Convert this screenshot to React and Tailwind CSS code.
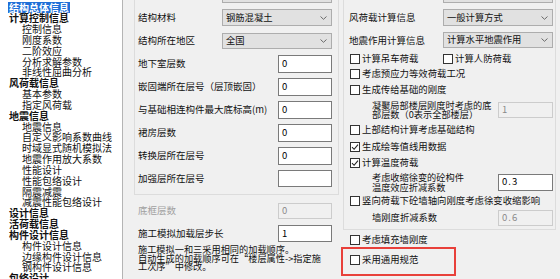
import clsx from 'clsx'

const treeItems = [
    { label: '结构总体信息', top: true, selected: true },
    { label: '计算控制信息', top: true },
    { label: '控制信息' },
    { label: '刚度系数' },
    { label: '二阶效应' },
    { label: '分析求解参数' },
    { label: '非线性屈曲分析' },
    { label: '风荷载信息', top: true },
    { label: '基本参数' },
    { label: '指定风荷载' },
    { label: '地震信息', top: true },
    { label: '地震信息' },
    { label: '自定义影响系数曲线' },
    { label: '时域显式随机模拟法' },
    { label: '地震作用放大系数' },
    { label: '性能设计' },
    { label: '性能包络设计' },
    { label: '隔震减震' },
    { label: '减震性能包络设计' },
    { label: '设计信息', top: true },
    { label: '活荷载信息', top: true },
    { label: '构件设计信息', top: true },
    { label: '构件设计信息' },
    { label: '边缘构件设计信息' },
    { label: '钢构件设计信息' },
    { label: '包络设计', top: true },
]

function Chevron() {
    return (
        <svg width="7" height="4" viewBox="0 0 7 4" className="shrink-0">
            <path d="M0.5 0.5 L3.5 3.3 L6.5 0.5" fill="none" stroke="#6a6a6a" strokeWidth="1" />
        </svg>
    )
}

function Select({ value, className }) {
    return (
        <div
            className={clsx(
                'w-[110px] flex items-center justify-between bg-[#e1e1e1] border border-[#adadad] pl-[3px] pr-[4px]',
                className
            )}
        >
            <span className="leading-none text-[9.3px]">{value}</span>
            <Chevron />
        </div>
    )
}

function Input({ value, disabled, className }) {
    return (
        <div
            className={clsx(
                'flex items-center pl-[3px] border leading-none',
                disabled
                    ? 'bg-[#f0f0f0] border-[#cccccc] text-[#8a8a8a]'
                    : 'bg-white border-[#7a7a7a] text-black',
                className
            )}
        >
            {value}
        </div>
    )
}

function Check({ checked, label, className }) {
    return (
        <div className={clsx('flex items-center', className)}>
            <span className="w-[10px] h-[10px] border border-[#333333] bg-white flex items-center justify-center shrink-0">
                {checked && (
                    <svg width="8" height="8" viewBox="0 0 8 8">
                        <path d="M1 4.2 L3.1 6.3 L7 1.6" fill="none" stroke="#222222" strokeWidth="1.1" />
                    </svg>
                )}
            </span>
            <span className="ml-[2px] leading-none whitespace-nowrap text-[9.4px]">{label}</span>
        </div>
    )
}

export default function App() {
    return (
        <div className="w-[560px] h-[279px] overflow-hidden bg-[#f0f0f0] flex relative text-[9.5px] text-[#111111] font-['Noto_Sans_CJK_SC','Liberation_Sans',sans-serif]">
            {/* tree */}
            <div className="w-[123px] h-full shrink-0 bg-white border-r border-[#b4b4b4] pt-[1.6px] overflow-hidden text-[10px]">
                {treeItems.map((item, i) => (
                    <div
                        key={i}
                        className={clsx(
                            'h-[10.84px] flex items-center whitespace-nowrap',
                            item.top ? 'pl-[8px] font-bold' : 'pl-[21px]'
                        )}
                    >
                        <span
                            className={clsx(
                                'leading-[9px] px-[1px]',
                                item.selected && 'bg-[#1f6fd8] text-white py-[1px]'
                            )}
                        >
                            {item.label}
                        </span>
                    </div>
                ))}
            </div>

            {/* middle column */}
            <div className="w-[220px] shrink-0 pl-[11px]">
                <div className="w-[205px] -mt-[20px] border border-[#dcdcdc] pt-[2px] pb-[4px] pl-[3px] pr-[6px]">
                    <div className="h-[23px] flex items-center justify-between">
                        <span>结构体系</span>
                        <Select value="框架结构" className="h-[17px]" />
                    </div>
                    <div className="h-[23px] flex items-center justify-between">
                        <span>结构材料</span>
                        <Select value="钢筋混凝土" className="h-[17px]" />
                    </div>
                    <div className="h-[23px] flex items-center justify-between">
                        <span>结构所在地区</span>
                        <Select value="全国" className="h-[16px]" />
                    </div>
                    <div className="h-[23px] flex items-center justify-between">
                        <span>地下室层数</span>
                        <Input value="0" className="w-[54px] h-[18px]" />
                    </div>
                    <div className="h-[23px] flex items-center justify-between">
                        <span>嵌固端所在层号（层顶嵌固）</span>
                        <Input value="0" className="w-[54px] h-[18px]" />
                    </div>
                    <div className="h-[23px] flex items-center justify-between">
                        <span className="whitespace-nowrap">与基础相连构件最大底标高(m)</span>
                        <Input value="0" className="w-[54px] h-[18px]" />
                    </div>
                    <div className="h-[23px] flex items-center justify-between">
                        <span>裙房层数</span>
                        <Input value="0" className="w-[54px] h-[18px]" />
                    </div>
                    <div className="h-[23px] flex items-center justify-between">
                        <span>转换层所在层号</span>
                        <Input value="0" className="w-[54px] h-[18px]" />
                    </div>
                    <div className="h-[23px] flex items-center justify-between">
                        <span>加强层所在层号</span>
                        <Input value="" className="w-[54px] h-[17px]" />
                    </div>
                </div>

                <div className="w-[198px] mt-[4px] pl-[4px]">
                    <div className="h-[23px] flex items-center justify-between">
                        <span className="text-[#a0a0a0]">底框层数</span>
                        <Input value="0" disabled className="w-[54px] h-[16px]" />
                    </div>
                    <div className="h-[23px] flex items-center justify-between">
                        <span>施工模拟加载层步长</span>
                        <Input value="1" className="w-[54px] h-[17px]" />
                    </div>
                    <div className="leading-[8.5px] whitespace-nowrap text-[9.2px]">
                        施工模拟一和三采用相同的加载顺序。
                        <br />
                        自动生成的加载顺序可在“楼层属性-&gt;指定施
                        <br />
                        工次序”中修改。
                    </div>
                </div>
            </div>

            {/* right column */}
            <div className="w-[213px] shrink-0">
                <div className="-mt-[20px] border border-[#dcdcdc] pt-[2px] pb-[2px] pl-[5px] pr-[2px]">
                    <div className="h-[23px] flex items-center justify-between">
                        <span>结构体系设计信息</span>
                        <Select value="按规范" className="h-[16px]" />
                    </div>
                    <div className="h-[23px] flex items-center justify-between">
                        <span>风荷载计算信息</span>
                        <Select value="一般计算方式" className="h-[17px]" />
                    </div>
                    <div className="h-[22px] flex items-center justify-between">
                        <span>地震作用计算信息</span>
                        <Select value="计算水平地震作用" className="h-[16px]" />
                    </div>
                    <div className="h-[15px] flex items-center pl-[1px]">
                        <Check label="计算吊车荷载" className="w-[93px]" />
                        <Check label="计算人防荷载" />
                    </div>
                    <div className="h-[16px] flex items-center pl-[1px]">
                        <Check label="考虑预应力等效荷载工况" />
                    </div>
                    <div className="h-[16px] flex items-center pl-[1px]">
                        <Check label="生成传给基础的刚度" />
                    </div>
                    <div className="h-[24px] flex items-center justify-between pl-[23px]">
                        <span className="leading-[9px] whitespace-nowrap text-[9.2px]">
                            凝聚局部楼层刚度时考虑的底
                            <br />
                            部层数（0表示全部楼层）
                        </span>
                        <Input value="1" disabled className="w-[55px] h-[16px]" />
                    </div>
                    <div className="h-[16px] flex items-center pl-[1px]">
                        <Check label="上部结构计算考虑基础结构" />
                    </div>
                    <div className="h-[17px] flex items-center pl-[1px]">
                        <Check checked label="生成绘等值线用数据" />
                    </div>
                    <div className="h-[16px] flex items-center pl-[1px]">
                        <Check checked label="计算温度荷载" />
                    </div>
                    <div className="h-[22px] flex items-center justify-between pl-[23px]">
                        <span className="leading-[10px] whitespace-nowrap text-[9.2px]">
                            考虑收缩徐变的砼构件
                            <br />
                            温度效应折减系数
                        </span>
                        <Input value="0.3" className="w-[55px] h-[17px] tracking-[1px]" />
                    </div>
                    <div className="h-[16px] flex items-center pl-[1px]">
                        <Check label="竖向荷载下砼墙轴向刚度考虑徐变收缩影响" />
                    </div>
                    <div className="h-[18px] flex items-center justify-between pl-[23px]">
                        <span className="text-[9.3px]">墙刚度折减系数</span>
                        <Input value="0.6" disabled className="w-[55px] h-[16px] tracking-[1px]" />
                    </div>
                </div>

                <div className="pl-[7px] mt-[2px]">
                    <div className="h-[13px] overflow-hidden">
                        <div className="h-[16px] flex items-center">
                            <Check label="考虑填充墙刚度" />
                        </div>
                    </div>
                    <div className="h-[16px] flex items-center mt-[7px]">
                        <Check label="采用通用规范" />
                    </div>
                </div>
            </div>

            {/* red annotation frame */}
            <div className="absolute left-[341px] top-[247px] w-[115px] h-[29px] border-2 border-[#e8403a]" />
        </div>
    )
}
